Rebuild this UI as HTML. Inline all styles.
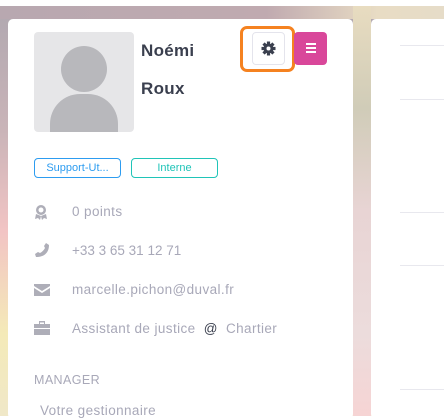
<!DOCTYPE html>
<html><head><meta charset="utf-8"><style>
*{margin:0;padding:0;box-sizing:border-box}
body{width:444px;height:416px;overflow:hidden;position:relative;font-family:"Liberation Sans",sans-serif;background:#fff}
.bg{position:absolute;left:0;top:6px;width:444px;height:410px;
background:linear-gradient(180deg,#b0a8b0 0%,#c9b4b8 30%,#f2c4c4 55%,#f4eab8 80%,#f0e8c8 100%)}
.bg2{position:absolute;left:353px;top:6px;width:18px;height:410px;background:linear-gradient(180deg,#e8dcc0 0%,#d0ccb8 25%,#e8d4d4 50%,#ecdcdc 80%,#f6d4d4 100%)}
.bg3{position:absolute;left:0;top:6px;width:444px;height:13px;background:linear-gradient(90deg,#b8a8b0,#c0aab0 60%,#e8dcc4 85%,#e6dcc8)}
.card{position:absolute;left:8px;top:19px;width:345px;height:400px;background:#fff;border-radius:5px}
.card2{position:absolute;left:371px;top:19px;width:80px;height:400px;background:#fff;border-radius:5px}
.hr{position:absolute;left:400px;width:44px;height:1px;background:#e8e8ee}
.av{position:absolute;left:34px;top:32px;width:100px;height:100px;border-radius:4px;background:#e6e6e8;overflow:hidden}
.head{position:absolute;left:27px;top:14px;width:46px;height:46px;border-radius:50%;background:#b8b8bc}
.bodyc{position:absolute;left:16px;top:62px;width:68px;height:60px;border-radius:30px 30px 0 0;background:#b8b8bc}
.pen{position:absolute;left:110px;top:105px;width:23px;height:23px;background:#ececee;border-radius:2px}
.name{position:absolute;left:141px;font-weight:bold;font-size:17px;color:#3a3f4e;letter-spacing:0.3px}
.gear{position:absolute;left:252px;top:32px;width:33px;height:33px;border:1px solid #e4e4ec;border-radius:4px;background:#fff}
.hl{position:absolute;left:240px;top:26px;width:55px;height:46px;border:3px solid #f58220;border-radius:7px}
.menu{position:absolute;left:294px;top:32px;width:33px;height:33px;background:#d9479a;border-radius:4px}
.menu i{position:absolute;left:12px;width:10px;height:2px;background:#fff}
.tag{position:absolute;top:158px;height:20px;border-radius:4px;font-size:11px;text-align:center;line-height:18px}
.row{position:absolute;left:72px;font-size:13.5px;color:#a8a8b8;letter-spacing:0.4px}
.ic{position:absolute;left:34px}
</style></head><body>
<div class="bg"></div><div class="bg3"></div><div class="bg2"></div>
<div class="card"></div>
<div class="card2"></div>
<div class="hr" style="top:45px"></div><div class="hr" style="top:99px"></div><div class="hr" style="top:212px"></div><div class="hr" style="top:265px"></div><div class="hr" style="top:389px"></div>
<div class="av"><div class="head"></div><div class="bodyc"></div>
<div class="pen"><svg width="23" height="23" viewBox="0 0 23 23"><path d="M7 16l1-3 7-7 2 2-7 7z" fill="#a8a8ac"/></svg></div></div>
<div class="name" style="top:41px">Noémi</div>
<div class="name" style="top:79px">Roux</div>
<div class="gear"><svg width="31" height="31" viewBox="0 0 31 31"><g transform="translate(15.5 15.5)" fill="#3a3f4e"><circle r="5"/><rect x="-1.6" y="-7" width="3.2" height="14"/><rect x="-1.6" y="-7" width="3.2" height="14" transform="rotate(45)"/><rect x="-1.6" y="-7" width="3.2" height="14" transform="rotate(90)"/><rect x="-1.6" y="-7" width="3.2" height="14" transform="rotate(135)"/><circle r="2" fill="#fff"/></g></svg></div>
<div class="hl"></div>
<div class="menu"><i style="top:11px"></i><i style="top:15px"></i><i style="top:19px"></i></div>
<div class="tag" style="left:34px;width:87px;border:1px solid #2d9cf0;color:#2d9cf0">Support-Ut...</div>
<div class="tag" style="left:131px;width:87px;border:1px solid #20c4b8;color:#20c4b8">Interne</div>
<svg class="ic" style="top:204px" width="16" height="18" viewBox="0 0 16 18"><circle cx="7" cy="6" r="5" fill="#aeaeb8"/><circle cx="7" cy="6" r="2.5" fill="#fff"/><path d="M2 10l-1 5 3-1 2 2 1-4zM12 10l1 5-3-1-2 2-1-4z" fill="#aeaeb8"/></svg>
<svg class="ic" style="top:242px" width="16" height="16" viewBox="0 0 16 16"><path d="M12 1l3 2c0 8-5 12-13 12l-1-3 3-2 2 1c2-1 4-3 5-5l-1-2z" fill="#aeaeb8"/></svg>
<svg class="ic" style="top:284px" width="16" height="12" viewBox="0 0 16 12"><path d="M0 0h16v2l-8 5-8-5z M0 4l8 5 8-5v8H0z" fill="#aeaeb8"/></svg>
<svg class="ic" style="top:321px" width="16" height="14" viewBox="0 0 16 14"><path d="M5 0h6v3H10V1.5H6V3H5z M0 3h16v4H0z M0 8h16v6H0z" fill="#aeaeb8"/></svg>
<div class="row" style="top:204px">0 points</div>
<div class="row" style="top:243px;letter-spacing:0">+33 3 65 31 12 71</div>
<div class="row" style="top:282px">marcelle.pichon@duval.fr</div>
<div class="row" style="top:321px">Assistant de justice <span style="color:#3a3f4e;margin:0 4px">@</span> Chartier</div>
<div class="row" style="left:34px;top:373px;font-size:12.5px">MANAGER</div>
<div class="row" style="left:40px;top:403px">Votre gestionnaire</div>
</body></html>
